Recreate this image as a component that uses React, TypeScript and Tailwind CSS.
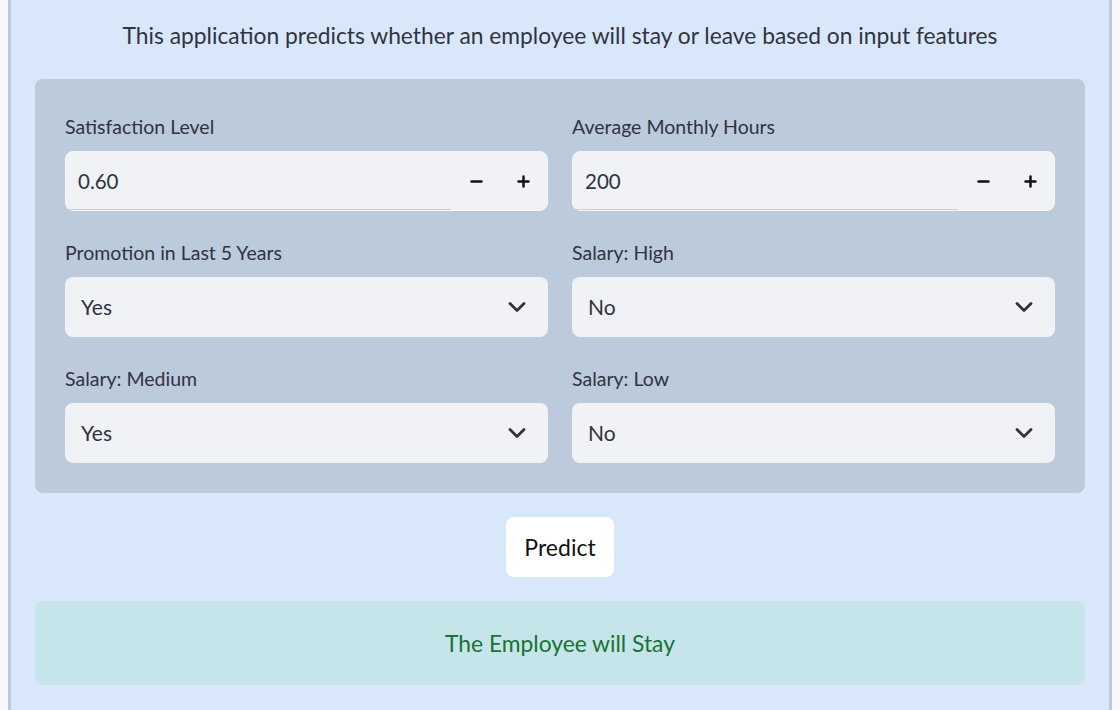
import { ChevronDown, Minus, Plus } from 'lucide-react';

const font = { fontFamily: 'Lato, "Noto Sans", sans-serif' };

function NumberField({ label, value }: { label: string; value: string }) {
  return (
    <div className="flex flex-col">
      <span className="text-[19.5px] leading-[24px] text-[#31333f] mb-[12px]">{label}</span>
      <div className="h-[60px] rounded-[8px] border border-[#f5f7fa] bg-[#f0f2f6] flex items-center relative">
        <span className="pl-[12px] text-[20.5px] text-[#31333f] flex-1">{value}</span>
        <div className="absolute left-0 bottom-0 h-[1px] w-[80%] bg-[#c9ced6]" />
        <button className="w-[47px] h-full flex items-center justify-center text-[#111]">
          <Minus size={17} strokeWidth={3.5} />
        </button>
        <button className="w-[47px] h-full flex items-center justify-center text-[#111]">
          <Plus size={17} strokeWidth={3.5} />
        </button>
      </div>
    </div>
  );
}

function SelectField({ label, value }: { label: string; value: string }) {
  return (
    <div className="flex flex-col">
      <span className="text-[19.5px] leading-[24px] text-[#31333f] mb-[12px]">{label}</span>
      <div className="h-[60px] rounded-[8px] bg-[#f0f2f6] flex items-center justify-between pl-[16px] pr-[17px]">
        <span className="text-[21px] text-[#31333f]">{value}</span>
        <ChevronDown size={28} strokeWidth={2.4} className="text-[#31333f]" />
      </div>
    </div>
  );
}

export default function App() {
  return (
    <div className="w-[1120px] h-[710px] bg-[#f8f9fb] px-[8px] overflow-hidden" style={font}>
      <div className="h-full bg-[#d8e8fa] border-x-[3px] border-[#bccbdb] px-[24px] pt-[20px]">
        <p className="text-center text-[22.8px] leading-[30px] text-[#31333f]">
          This application predicts whether an employee will stay or leave based on input features
        </p>
        <div className="mt-[29px] bg-[#bccbdb] rounded-[8px] px-[30px] pt-[36px] pb-[30px] grid grid-cols-2 gap-x-[24px] gap-y-[30px]">
          <NumberField label="Satisfaction Level" value="0.60" />
          <NumberField label="Average Monthly Hours" value="200" />
          <SelectField label="Promotion in Last 5 Years" value="Yes" />
          <SelectField label="Salary: High" value="No" />
          <SelectField label="Salary: Medium" value="Yes" />
          <SelectField label="Salary: Low" value="No" />
        </div>
        <div className="flex justify-center mt-[24px]">
          <button className="h-[60px] px-[18px] bg-white rounded-[8px] text-[23px] text-[#111]">Predict</button>
        </div>
        <div className="mt-[24px] h-[84px] rounded-[8px] bg-[#c6e5ea] flex items-center justify-center text-[22.8px] text-[#177233]">
          The Employee will Stay
        </div>
      </div>
    </div>
  );
}
